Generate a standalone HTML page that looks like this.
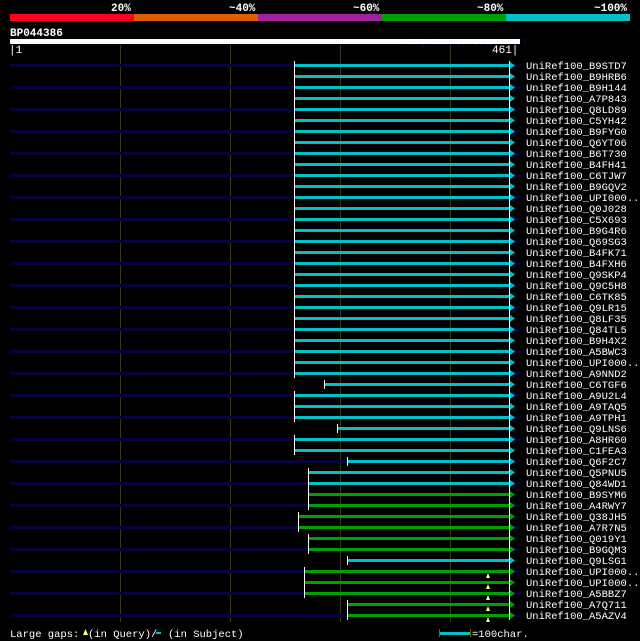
<!DOCTYPE html>
<html><head><meta charset="utf-8"><style>
html,body{margin:0;padding:0;background:#000;width:640px;height:641px;overflow:hidden}
svg{display:block}
text{font-family:"Liberation Mono","DejaVu Sans Mono",monospace;fill:#fff}
</style></head><body>
<svg width="640" height="641" xmlns="http://www.w3.org/2000/svg">
<rect x="0" y="0" width="640" height="641" fill="#000"/>
<g font-weight="bold" font-size="11">
<text x="111" y="11">20%</text><text x="229" y="11">~40%</text><text x="353" y="11">~60%</text><text x="477" y="11">~80%</text><text x="594" y="11">~100%</text>
</g>
<rect x="10" y="14" width="124" height="7" fill="#ff0020"/>
<rect x="134" y="14" width="124" height="7" fill="#e06000"/>
<rect x="258" y="14" width="124" height="7" fill="#a020a0"/>
<rect x="382" y="14" width="124" height="7" fill="#00a000"/>
<rect x="506" y="14" width="124" height="7" fill="#00c0c8"/>
<text x="10" y="36" font-weight="bold" font-size="11">BP044386</text>
<text x="403" y="45" font-size="9" style="fill:#101040">AlignView.pm Beta rel.7</text>
<rect x="10" y="39" width="510" height="5" fill="#fff"/>
<text x="9" y="53" font-size="11">|1</text><text x="492" y="53" font-size="11">461|</text>
<g stroke="#3a3a18" stroke-width="1">
<line x1="120.5" y1="45" x2="120.5" y2="622"/><line x1="230.5" y1="45" x2="230.5" y2="622"/><line x1="340.5" y1="45" x2="340.5" y2="622"/><line x1="450.5" y1="45" x2="450.5" y2="622"/>
</g>
<g fill="#03033a">
<rect x="10" y="64" width="510" height="3"/><rect x="10" y="86" width="510" height="3"/><rect x="10" y="108" width="510" height="3"/><rect x="10" y="130" width="510" height="3"/><rect x="10" y="152" width="510" height="3"/><rect x="10" y="174" width="510" height="3"/><rect x="10" y="196" width="510" height="3"/><rect x="10" y="218" width="510" height="3"/><rect x="10" y="240" width="510" height="3"/><rect x="10" y="262" width="510" height="3"/><rect x="10" y="284" width="510" height="3"/><rect x="10" y="306" width="510" height="3"/><rect x="10" y="328" width="510" height="3"/><rect x="10" y="350" width="510" height="3"/><rect x="10" y="372" width="510" height="3"/><rect x="10" y="394" width="510" height="3"/><rect x="10" y="416" width="510" height="3"/><rect x="10" y="438" width="510" height="3"/><rect x="10" y="460" width="510" height="3"/><rect x="10" y="482" width="510" height="3"/><rect x="10" y="504" width="510" height="3"/><rect x="10" y="526" width="510" height="3"/><rect x="10" y="548" width="510" height="3"/><rect x="10" y="570" width="510" height="3"/><rect x="10" y="592" width="510" height="3"/><rect x="10" y="614" width="510" height="3"/>
</g>
<!-- alignment rows: y = 64 + 11*i -->
<g fill="#00c0c8">
<rect x="295" y="64" width="215" height="3"/><rect x="295" y="75" width="215" height="3"/><rect x="295" y="86" width="215" height="3"/><rect x="295" y="97" width="215" height="3"/><rect x="295" y="108" width="215" height="3"/><rect x="295" y="119" width="215" height="3"/><rect x="295" y="130" width="215" height="3"/><rect x="295" y="141" width="215" height="3"/><rect x="295" y="152" width="215" height="3"/><rect x="295" y="163" width="215" height="3"/><rect x="295" y="174" width="215" height="3"/><rect x="295" y="185" width="215" height="3"/><rect x="295" y="196" width="215" height="3"/><rect x="295" y="207" width="215" height="3"/><rect x="295" y="218" width="215" height="3"/><rect x="295" y="229" width="215" height="3"/><rect x="295" y="240" width="215" height="3"/><rect x="295" y="251" width="215" height="3"/><rect x="295" y="262" width="215" height="3"/><rect x="295" y="273" width="215" height="3"/><rect x="295" y="284" width="215" height="3"/><rect x="295" y="295" width="215" height="3"/><rect x="295" y="306" width="215" height="3"/><rect x="295" y="317" width="215" height="3"/><rect x="295" y="328" width="215" height="3"/><rect x="295" y="339" width="215" height="3"/><rect x="295" y="350" width="215" height="3"/><rect x="295" y="361" width="215" height="3"/><rect x="295" y="372" width="215" height="3"/>
<rect x="325" y="383" width="185" height="3"/><rect x="295" y="394" width="215" height="3"/><rect x="295" y="405" width="215" height="3"/><rect x="295" y="416" width="215" height="3"/><rect x="338" y="427" width="172" height="3"/><rect x="295" y="438" width="215" height="3"/><rect x="295" y="449" width="215" height="3"/><rect x="348" y="460" width="162" height="3"/><rect x="309" y="471" width="201" height="3"/><rect x="309" y="482" width="201" height="3"/>
<rect x="348" y="559" width="162" height="3"/>
</g>
<g fill="#00a000">
<rect x="309" y="493" width="201" height="3"/><rect x="309" y="504" width="201" height="3"/><rect x="299" y="515" width="211" height="3"/><rect x="299" y="526" width="211" height="3"/><rect x="309" y="537" width="201" height="3"/><rect x="309" y="548" width="201" height="3"/>
<rect x="305" y="570" width="205" height="3"/><rect x="305" y="581" width="205" height="3"/><rect x="305" y="592" width="205" height="3"/><rect x="348" y="603" width="162" height="3"/><rect x="348" y="614" width="162" height="3"/>
</g>
<!-- start ticks -->
<g fill="#fff">
<rect x="294" y="61" width="1" height="317"/>
<rect x="324" y="380" width="1" height="9"/><rect x="294" y="391" width="1" height="31"/><rect x="337" y="424" width="1" height="9"/><rect x="294" y="435" width="1" height="20"/><rect x="347" y="457" width="1" height="9"/><rect x="308" y="468" width="1" height="42"/><rect x="298" y="512" width="1" height="20"/><rect x="308" y="534" width="1" height="20"/><rect x="347" y="556" width="1" height="9"/><rect x="304" y="567" width="1" height="31"/><rect x="347" y="600" width="1" height="20"/>
<rect x="509" y="61" width="1" height="559"/>
</g>
<!-- arrows -->
<g fill="#00c0c8">
<path d="M510 62l5 3.5l-5 3.5z M510 73l5 3.5l-5 3.5z M510 84l5 3.5l-5 3.5z M510 95l5 3.5l-5 3.5z M510 106l5 3.5l-5 3.5z M510 117l5 3.5l-5 3.5z M510 128l5 3.5l-5 3.5z M510 139l5 3.5l-5 3.5z M510 150l5 3.5l-5 3.5z M510 161l5 3.5l-5 3.5z M510 172l5 3.5l-5 3.5z M510 183l5 3.5l-5 3.5z M510 194l5 3.5l-5 3.5z M510 205l5 3.5l-5 3.5z M510 216l5 3.5l-5 3.5z M510 227l5 3.5l-5 3.5z M510 238l5 3.5l-5 3.5z M510 249l5 3.5l-5 3.5z M510 260l5 3.5l-5 3.5z M510 271l5 3.5l-5 3.5z M510 282l5 3.5l-5 3.5z M510 293l5 3.5l-5 3.5z M510 304l5 3.5l-5 3.5z M510 315l5 3.5l-5 3.5z M510 326l5 3.5l-5 3.5z M510 337l5 3.5l-5 3.5z M510 348l5 3.5l-5 3.5z M510 359l5 3.5l-5 3.5z M510 370l5 3.5l-5 3.5z M510 381l5 3.5l-5 3.5z M510 392l5 3.5l-5 3.5z M510 403l5 3.5l-5 3.5z M510 414l5 3.5l-5 3.5z M510 425l5 3.5l-5 3.5z M510 436l5 3.5l-5 3.5z M510 447l5 3.5l-5 3.5z M510 458l5 3.5l-5 3.5z M510 469l5 3.5l-5 3.5z M510 480l5 3.5l-5 3.5z M510 557l5 3.5l-5 3.5z"/>
</g>
<g fill="#00a000">
<path d="M510 491l5 3.5l-5 3.5z M510 502l5 3.5l-5 3.5z M510 513l5 3.5l-5 3.5z M510 524l5 3.5l-5 3.5z M510 535l5 3.5l-5 3.5z M510 546l5 3.5l-5 3.5z M510 568l5 3.5l-5 3.5z M510 579l5 3.5l-5 3.5z M510 590l5 3.5l-5 3.5z M510 601l5 3.5l-5 3.5z M510 612l5 3.5l-5 3.5z"/>
</g>
<g fill="#ffff80">
<path d="M488 573l2 5h-4z M488 584l2 5h-4z M488 595l2 5h-4z M488 606l2 5h-4z M488 617l2 5h-4z"/>
</g>
<g font-size="10.5">
<text x="526" y="69">UniRef100_B9STD7</text><text x="526" y="80">UniRef100_B9HRB6</text><text x="526" y="91">UniRef100_B9H144</text><text x="526" y="102">UniRef100_A7P843</text><text x="526" y="113">UniRef100_Q8LD89</text><text x="526" y="124">UniRef100_C5YH42</text><text x="526" y="135">UniRef100_B9FYG0</text><text x="526" y="146">UniRef100_Q6YT06</text><text x="526" y="157">UniRef100_B6T730</text><text x="526" y="168">UniRef100_B4FH41</text><text x="526" y="179">UniRef100_C6TJW7</text><text x="526" y="190">UniRef100_B9GQV2</text><text x="526" y="201">UniRef100_UPI000..</text><text x="526" y="212">UniRef100_Q0J028</text><text x="526" y="223">UniRef100_C5X693</text><text x="526" y="234">UniRef100_B9G4R6</text><text x="526" y="245">UniRef100_Q69SG3</text><text x="526" y="256">UniRef100_B4FK71</text><text x="526" y="267">UniRef100_B4FXH6</text><text x="526" y="278">UniRef100_Q9SKP4</text><text x="526" y="289">UniRef100_Q9C5H8</text><text x="526" y="300">UniRef100_C6TK85</text><text x="526" y="311">UniRef100_Q9LR15</text><text x="526" y="322">UniRef100_Q8LF35</text><text x="526" y="333">UniRef100_Q84TL5</text><text x="526" y="344">UniRef100_B9H4X2</text><text x="526" y="355">UniRef100_A5BWC3</text><text x="526" y="366">UniRef100_UPI000..</text><text x="526" y="377">UniRef100_A9NND2</text><text x="526" y="388">UniRef100_C6TGF6</text><text x="526" y="399">UniRef100_A9U2L4</text><text x="526" y="410">UniRef100_A9TAQ5</text><text x="526" y="421">UniRef100_A9TPH1</text><text x="526" y="432">UniRef100_Q9LNS6</text><text x="526" y="443">UniRef100_A8HR60</text><text x="526" y="454">UniRef100_C1FEA3</text><text x="526" y="465">UniRef100_Q6F2C7</text><text x="526" y="476">UniRef100_Q5PNU5</text><text x="526" y="487">UniRef100_Q84WD1</text><text x="526" y="498">UniRef100_B9SYM6</text><text x="526" y="509">UniRef100_A4RWY7</text><text x="526" y="520">UniRef100_Q38JH5</text><text x="526" y="531">UniRef100_A7R7N5</text><text x="526" y="542">UniRef100_Q019Y1</text><text x="526" y="553">UniRef100_B9GQM3</text><text x="526" y="564">UniRef100_Q9LSG1</text><text x="526" y="575">UniRef100_UPI000..</text><text x="526" y="586">UniRef100_UPI000..</text><text x="526" y="597">UniRef100_A5BBZ7</text><text x="526" y="608">UniRef100_A7Q711</text><text x="526" y="619">UniRef100_A5AZV4</text>
</g>
<text x="10" y="637" font-size="10.5">Large gaps:</text>
<path d="M83 635l2.5-6 2.5 6z" fill="#ffff80"/>
<text x="88" y="637" font-size="10.5">(in Query)/</text>
<rect x="156" y="632" width="5" height="2" fill="#00c0c8"/>
<text x="168" y="637" font-size="10.5">(in Subject)</text>
<rect x="440" y="632" width="30" height="3" fill="#00c0c8"/>
<rect x="439" y="629" width="1" height="8" fill="#806000"/><rect x="470" y="629" width="1" height="8" fill="#806000"/>
<text x="472" y="637" font-size="10.5">=100char.</text>
</svg>
</body></html>
